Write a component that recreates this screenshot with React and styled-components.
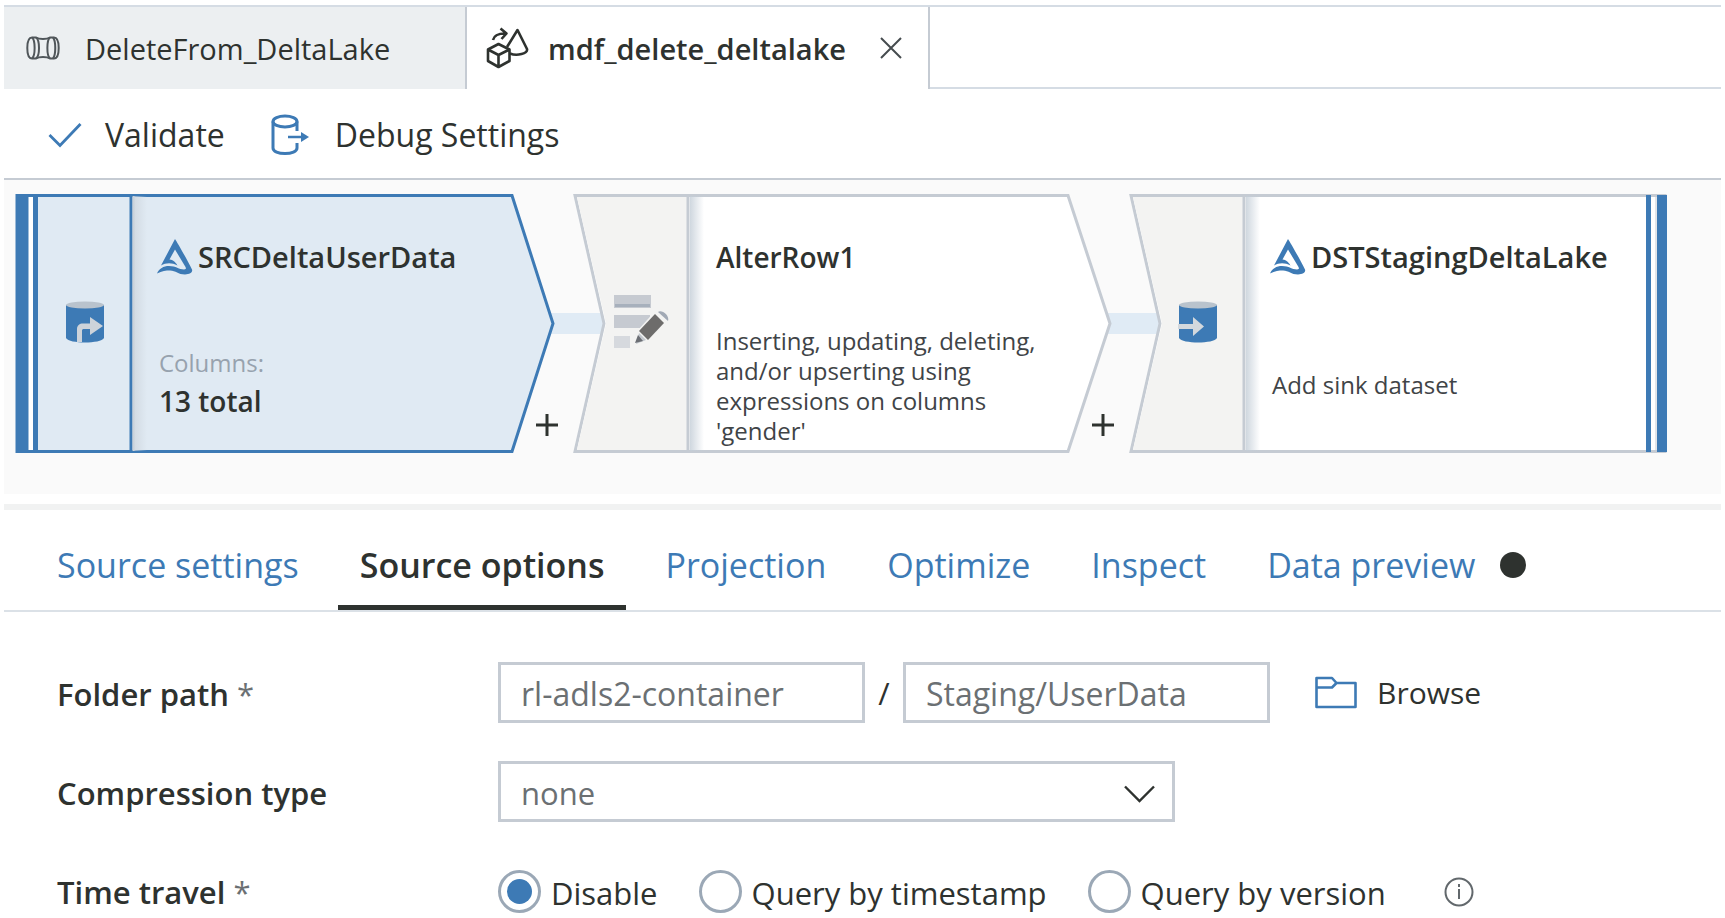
import React, { useState } from "react";
import styled, { createGlobalStyle, css } from "styled-components";

const BLUE = "#3d7ab5";
const INK = "#2e322f";
const LINE = "#c5cbd3";

const GlobalStyle = createGlobalStyle`
  *, *::before, *::after { box-sizing: border-box; }
  body {
    margin: 0;
    background: #fff;
    color: ${INK};
    font-family: "Open Sans", "Noto Sans", sans-serif;
    font-size: 31px;
    overflow: hidden;
  }
  button, input, select { font: inherit; color: inherit; }
  button { background: none; border: 0; padding: 0; cursor: pointer; }
  h2, p { margin: 0; }
`;

const Page = styled.main`
  display: flex;
  flex-direction: column;
  padding: 5px 4px 0;
`;

/* ---- File tabs ---- */
const FileTabs = styled.nav`
  display: flex;
  height: 84px;
  border-top: 2px solid #d5dce4;
`;

const FileTab = styled.div`
  display: flex;
  align-items: center;
  width: 463px;
  padding: 0 26px 0 ${(p) => (p.$active ? 19 : 22)}px;
  font-size: 29px;
  font-weight: ${(p) => (p.$active ? 600 : 400)};
  background: ${(p) => (p.$active ? "#fff" : "#eceff1")};
  border-right: 2px solid ${LINE};
  svg { flex: none; }
`;

const FileName = styled.button`
  margin-left: ${(p) => p.$gap}px;
  font-weight: inherit;
  white-space: nowrap;
`;

const CloseButton = styled.button`
  display: flex;
  margin-left: auto;
`;

const FileTabsRest = styled.div`
  flex: 1;
  border-bottom: 2px solid #d5dce4;
`;

/* ---- Toolbar ---- */
const Toolbar = styled.div`
  display: flex;
  align-items: center;
  gap: 46px;
  height: 91px;
  padding: 2px 44px 0;
  font-size: 32px;
  border-bottom: 2px solid ${LINE};
`;

const ToolButton = styled.button`
  display: flex;
  align-items: center;
  gap: ${(p) => p.$gap}px;
  white-space: nowrap;
`;

/* ---- Data flow canvas ---- */
const Canvas = styled.section`
  position: relative;
  height: 324px;
  background: #fafafa;
  border-bottom: 10px solid #fff;
  overflow: hidden;
`;

const Node = styled.article`
  position: absolute;
  top: 14px;
  left: ${(p) => p.$x}px;
  width: ${(p) => p.$w}px;
  height: 259px;
  display: flex;
`;

const Outline = styled.svg`
  position: absolute;
  inset: 0;
  overflow: visible;
`;

const Stem = styled.div`
  position: relative;
  display: flex;
  align-items: center;
  justify-content: flex-end;
  flex: none;
  width: 117px;
  padding: 0 ${(p) => p.$pad}px 4px 0;
`;

const NodeBody = styled.div`
  position: relative;
  display: flex;
  flex-direction: column;
  flex: 1;
  padding: 41px 0 0 24px;
`;

const NodeTitle = styled.h2`
  display: flex;
  align-items: center;
  gap: 5px;
  height: 44px;
  padding-left: ${(p) => p.$indent || 0}px;
  font-size: ${(p) => (p.$indent ? 28 : 29)}px;
  font-weight: 600;
  line-height: 44px;
  white-space: nowrap;
`;

const NodeText = styled.p`
  width: 350px;
  margin-top: ${(p) => p.$top}px;
  padding-left: 2px;
  font-size: 24px;
  line-height: 30px;
  color: #3f4447;
`;

const Muted = styled(NodeText)`
  color: #97a2ae;
`;

const Total = styled(NodeText)`
  font-size: 28px;
  line-height: 40px;
  font-weight: 600;
  color: ${INK};
`;

const Link = styled.div`
  position: absolute;
  top: 133px;
  left: ${(p) => p.$x}px;
  width: 60px;
  height: 21px;
  background: #e0ebf5;
`;

const AddButton = styled.button`
  position: absolute;
  top: 234px;
  left: ${(p) => p.$x}px;
  display: flex;
`;

const Splitter = styled.div`
  height: 6px;
  background: #f1f2f2;
`;

/* ---- Settings tabs ---- */
const Tabs = styled.nav`
  display: flex;
  height: 102px;
  padding-left: 31px;
  border-bottom: 2px solid #dbe1e7;
`;

const Tab = styled.button`
  display: flex;
  align-items: center;
  gap: 25px;
  padding: 14px 22px 0;
  margin-right: 17px;
  font-size: 34px;
  white-space: nowrap;
  color: ${BLUE};
  border-bottom: 5px solid transparent;
  ${(p) =>
    p.$active &&
    css`
      color: ${INK};
      font-weight: 600;
      border-bottom-color: ${INK};
    `}
`;

const Dot = styled.span`
  width: 26px;
  height: 26px;
  border-radius: 50%;
  background: ${INK};
`;

/* ---- Form ---- */
const Form = styled.form`
  display: flex;
  flex-direction: column;
  gap: 38px;
  padding: 50px 53px 0;
`;

const Row = styled.div`
  display: flex;
  align-items: center;
  height: 61px;
`;

const RowLabel = styled.label`
  flex: none;
  width: 441px;
  padding-top: 3px;
  font-weight: 600;
  white-space: nowrap;
`;

const Required = styled.span`
  font-weight: 400;
  color: #6b7073;
`;

const TextBox = styled.input`
  width: 367px;
  height: 61px;
  padding: 2px 20px 0;
  border: 3px solid ${LINE};
  border-radius: 0;
  background: #fff;
  color: #6b7073;
  font-size: 32px;
`;

const Slash = styled.span`
  width: 38px;
  text-align: center;
`;

const BrowseButton = styled.button`
  display: flex;
  align-items: center;
  gap: 20px;
  margin-left: 45px;
  font-size: 30px;
`;

const SelectWrap = styled.div`
  display: flex;
  align-items: center;
  width: 677px;
  svg { margin: 4px 0 0 -51px; pointer-events: none; }
`;

const Select = styled.select`
  appearance: none;
  width: 100%;
  flex: none;
  height: 61px;
  padding: 2px 20px 0;
  border: 3px solid ${LINE};
  border-radius: 0;
  background: #fff;
  color: #6b7073;
`;

const RadioGroup = styled.div`
  display: flex;
  align-items: center;
  gap: 41px;
  padding-top: 2px;
`;

const RadioLabel = styled.label`
  display: flex;
  align-items: center;
  gap: 10px;
  white-space: nowrap;
`;

const RadioText = styled.span`
  padding-top: 3px;
`;

const Radio = styled.input`
  appearance: none;
  display: grid;
  place-items: center;
  width: 43px;
  height: 43px;
  margin: 0;
  border: 3px solid #9ba8b6;
  border-radius: 50%;
  background: #fff;
  &:checked::before {
    content: "";
    width: 25px;
    height: 25px;
    border-radius: 50%;
    background: ${BLUE};
  }
`;

const InfoButton = styled.button`
  display: flex;
  margin-left: 17px;
`;

/* ---- Icons ---- */
const PipelineIcon = () => (
  <svg width="34" height="24" viewBox="0 0 34 24" fill="none" stroke="#50565a" strokeWidth="2">
    <path d="M6 1.5C2.8 1.5 1.3 5 1.3 12S2.8 22.500 6 22.500H10C13 20.500 21 20.500 24 22.500H28C31.200 22.500 32.700 19 32.700 12S31.200 1.500 28 1.500H24C21 3.500 13 3.500 10 1.500Z" />
    <path d="M6 1.500C9.500 4 9.500 20 6 22.500M10 1.500C14 4 14 20 10 22.500M24 1.500C20.500 4 20.500 20 24 22.500M27 1.500C30 5 30 19 27 22.500" />
  </svg>
);

const DataflowIcon = () => (
  <svg width="43" height="42" viewBox="0 0 43 42" fill="none" stroke={INK} strokeWidth="2.600" strokeLinejoin="round">
    <path d="M2 22.500 12.500 17 23.500 22.500V34L12.500 40 2 34ZM2 22.500 12.500 28 23.500 22.500M12.500 28V40" />
    <path d="M21 20 31.500 3 41 22C42 26.500 31 29.500 24 26.500" />
    <path d="M7 13C8 8.500 12 6.500 19 6.500M14.500 1.500 20.500 6.500 15.500 12" />
  </svg>
);

const CloseIcon = () => (
  <svg width="22" height="22" viewBox="0 0 22 22" stroke="#454b4e" strokeWidth="2">
    <path d="M1 1 21 21M21 1 1 21" />
  </svg>
);

const CheckIcon = () => (
  <svg width="34" height="26" viewBox="0 0 34 26" fill="none" stroke={BLUE} strokeWidth="2.800">
    <path d="M1.500 13 12 23.500 32.500 2" />
  </svg>
);

const DebugIcon = () => (
  <svg width="38" height="42" viewBox="0 0 38 42" fill="none" stroke={BLUE} strokeWidth="3">
    <ellipse cx="14" cy="7.500" rx="12" ry="5.500" />
    <path d="M2 7.500V34C2 37.500 7.500 39.500 14 39.500S26 37.500 26 34V29M26 7.500V17" />
    <path d="M17 23H33" strokeWidth="2.500" />
    <path d="M30 18 38 23 30 28Z" fill={BLUE} stroke="none" />
  </svg>
);

const DeltaIcon = () => (
  <svg width="36" height="36" viewBox="0 0 36 36">
    <path
      fill={BLUE}
      fillRule="evenodd"
      d="M18 0C20 3 31 22 35 30.500C36 33.500 33 35.500 28 35.500C21 35.500 19 31.500 13 31.500C9 31.500 5 32 0 34.500C2 29.500 6.500 27 12 27C19 27 22 30.500 27 30.500C29.500 30.500 29 29 28.500 28L18 10.500L12.500 20.500C17 21 19 24 20.500 26.500C15 23.500 9 23.500 4 26.500Z"
    />
  </svg>
);

const Cylinder = ({ children, label }) => (
  <svg width="40" height="42" viewBox="0 0 40 42" role="img" aria-label={label}>
    <path fill={BLUE} d="M1 4H39V37C36 43 4 43 1 37Z" />
    <ellipse cx="20" cy="4" rx="19" ry="3.500" fill="#b9c3cd" />
    {children}
  </svg>
);

const SourceIcon = () => (
  <Cylinder label="Source">
    <path fill="#cdd3da" d="M12 41V28C12 24.500 14.500 22.500 18 22.500H25V16L38 25 25 34V28H19C17.500 28 17 28.500 17 30V41Z" />
  </Cylinder>
);

const SinkIcon = () => (
  <Cylinder label="Sink">
    <path fill="#d3d8dd" d="M0 23H15V16L26 25.500 15 35V28H0Z" />
  </Cylinder>
);

const AlterRowIcon = () => (
  <svg width="56" height="54" viewBox="0 0 56 54" role="img" aria-label="Alter row">
    <path fill="#c6cad1" d="M0 0H37V13H0ZM0 20H36V33H0Z" />
    <path fill="#a7b0bc" d="M1 9H36V12H1Z" />
    <path fill="#d6d9de" d="M0 41H16V53H0Z" />
    <path fill="#f3f3f2" d="M18 52 24 35 43 14 55 22 37 45Z" />
    <path fill="#6d6c6b" d="M25 36 41 19 50 28 34 45Z" />
    <path fill="#c2c7cd" d="M25 38 32 45 22 49Z" />
    <path fill="#6b6e74" d="M24 40 29 46 21 48Z" />
    <path fill="#a1a9b5" d="M44 17C47 14 56 20 54 26Z" />
  </svg>
);

const PlusIcon = () => (
  <svg width="22" height="22" viewBox="0 0 22 22" stroke={INK} strokeWidth="3">
    <path d="M11 0V22M0 11H22" />
  </svg>
);

const FolderIcon = () => (
  <svg width="42" height="33" viewBox="0 0 42 33" fill="none" stroke={BLUE} strokeWidth="2.600" strokeLinejoin="round">
    <path d="M1.500 31V2H17L21.500 7H40.500V31ZM1.500 11.500H17L21.500 7" />
  </svg>
);

const ChevronIcon = () => (
  <svg width="31" height="18" viewBox="0 0 31 18" fill="none" stroke={INK} strokeWidth="2.400">
    <path d="M1 1.500 15.500 16 30 1.500" />
  </svg>
);

const InfoIcon = () => (
  <svg width="30" height="30" viewBox="0 0 30 30" fill="none" stroke="#62686c" strokeWidth="2">
    <circle cx="15" cy="15" r="13.500" />
    <path d="M15 12V22M15 7V10" />
  </svg>
);

const Shade = ({ id, color, w }) => (
  <>
    <defs>
      <linearGradient id={id}>
        <stop offset="0" stopColor={color} stopOpacity="0.8" />
        <stop offset="1" stopColor={color} stopOpacity="0" />
      </linearGradient>
    </defs>
    <rect x="117" y="2" width={w} height="255" fill={`url(#${id})`} />
  </>
);

const TABS = ["Source settings", "Source options", "Projection", "Optimize", "Inspect", "Data preview"];
const TRAVEL = ["Disable", "Query by timestamp", "Query by version"];

export default function App() {
  const [tab, setTab] = useState("Source options");
  const [travel, setTravel] = useState("Disable");

  return (
    <Page>
      <GlobalStyle />
      <FileTabs aria-label="Open files">
        <FileTab>
          <PipelineIcon />
          <FileName $gap={25}>DeleteFrom_DeltaLake</FileName>
        </FileTab>
        <FileTab $active>
          <DataflowIcon />
          <FileName $gap={19}>mdf_delete_deltalake</FileName>
          <CloseButton aria-label="Close">
            <CloseIcon />
          </CloseButton>
        </FileTab>
        <FileTabsRest />
      </FileTabs>

      <Toolbar>
        <ToolButton $gap={23}>
          <CheckIcon />
          Validate
        </ToolButton>
        <ToolButton $gap={26}>
          <DebugIcon />
          Debug Settings
        </ToolButton>
      </Toolbar>

      <Canvas>
        <Link $x={545} />
        <Link $x={1102} />
        <Node $x={12} $w={539}>
          <Outline width="539" height="259">
            <path d="M1 1.500H496L537 129.500 496 257.500H1Z" fill="#e0eaf3" stroke={BLUE} strokeWidth="3" />
            <path d="M0 0H22V259H0Z" fill={BLUE} />
            <path d="M12.500 3H17V256H12.500Z" fill="#fff" />
            <path d="M115 1V258" stroke={BLUE} strokeWidth="3" />
            <path d="M117.500 2V257" stroke="#c2cad3" strokeWidth="2" />
            <Shade id="shade-source" color="#cdd5dd" w="14" />
          </Outline>
          <Stem $pad={28}>
            <SourceIcon />
          </Stem>
          <NodeBody>
            <NodeTitle>
              <DeltaIcon />
              SRCDeltaUserData
            </NodeTitle>
            <Muted $top={69}>Columns:</Muted>
            <Total $top={3}>13 total</Total>
          </NodeBody>
        </Node>
        <AddButton $x={532} aria-label="Add a step after SRCDeltaUserData">
          <PlusIcon />
        </AddButton>

        <Node $x={569} $w={539}>
          <Outline width="539" height="259">
            <path d="M2 1.500H495L537 129.500 495 257.500H2L31 129.500Z" fill="#fff" stroke={LINE} strokeWidth="3" />
            <path d="M4 3H115V256H4L33 129.500Z" fill="#f3f3f2" />
            <path d="M115 1V258" stroke={LINE} strokeWidth="3" />
            <Shade id="shade-alter" color="#c3cdd7" w="14" />
          </Outline>
          <Stem $pad={20}>
            <AlterRowIcon />
          </Stem>
          <NodeBody>
            <NodeTitle $indent={2}>AlterRow1</NodeTitle>
            <NodeText $top={47}>
              Inserting, updating, deleting, and/or upserting using expressions on columns 'gender'
            </NodeText>
          </NodeBody>
        </Node>
        <AddButton $x={1088} aria-label="Add a step after AlterRow1">
          <PlusIcon />
        </AddButton>

        <Node $x={1125} $w={538}>
          <Outline width="538" height="259">
            <path d="M2 1.500H536V257.500H2L31 129.500Z" fill="#fff" stroke={LINE} strokeWidth="3" />
            <path d="M4 3H115V256H4L33 129.500Z" fill="#f3f3f2" />
            <path d="M115 1V258" stroke={LINE} strokeWidth="3" />
            <Shade id="shade-sink" color="#c3cdd7" w="14" />
            <path d="M517 1H522V258H517ZM528 1H538V258H528Z" fill={BLUE} />
            <path d="M527 1V258" stroke={LINE} strokeWidth="1" />
          </Outline>
          <Stem $pad={28}>
            <SinkIcon />
          </Stem>
          <NodeBody>
            <NodeTitle>
              <DeltaIcon />
              DSTStagingDeltaLake
            </NodeTitle>
            <NodeText $top={91}>Add sink dataset</NodeText>
          </NodeBody>
        </Node>
      </Canvas>
      <Splitter />

      <Tabs aria-label="Source configuration">
        {TABS.map((name) => (
          <Tab key={name} $active={name === tab} onClick={() => setTab(name)}>
            {name}
            {name === "Data preview" && <Dot />}
          </Tab>
        ))}
      </Tabs>

      <Form>
        <Row>
          <RowLabel htmlFor="container">
            Folder path <Required>*</Required>
          </RowLabel>
          <TextBox id="container" defaultValue="rl-adls2-container" />
          <Slash>/</Slash>
          <TextBox aria-label="Folder" defaultValue="Staging/UserData" />
          <BrowseButton type="button">
            <FolderIcon />
            Browse
          </BrowseButton>
        </Row>
        <Row>
          <RowLabel htmlFor="compression">Compression type</RowLabel>
          <SelectWrap>
            <Select id="compression" defaultValue="none">
              <option>none</option>
            </Select>
            <ChevronIcon />
          </SelectWrap>
        </Row>
        <Row>
          <RowLabel as="span" id="travel-label">
            Time travel <Required>*</Required>
          </RowLabel>
          <RadioGroup role="radiogroup" aria-labelledby="travel-label">
            {TRAVEL.map((name) => (
              <RadioLabel key={name}>
                <Radio type="radio" name="travel" checked={name === travel} onChange={() => setTravel(name)} />
                <RadioText>{name}</RadioText>
              </RadioLabel>
            ))}
            <InfoButton type="button" aria-label="About time travel">
              <InfoIcon />
            </InfoButton>
          </RadioGroup>
        </Row>
      </Form>
    </Page>
  );
}
